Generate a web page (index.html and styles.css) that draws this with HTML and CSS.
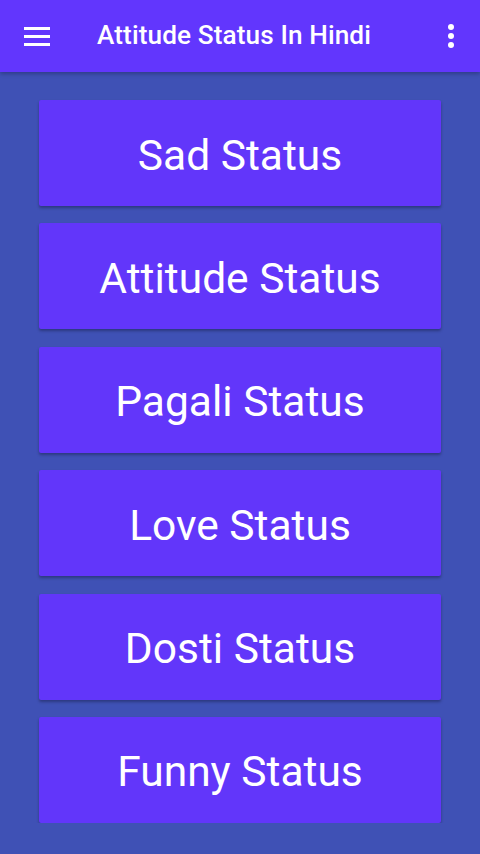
FILE: index.html
```html
<!DOCTYPE html>
<html lang="en">
<head>
  <meta charset="UTF-8">
  <title>Attitude Status In Hindi</title>
  <meta name="viewport" content="width=device-width, initial-scale=1">
  <link rel="stylesheet" href="styles.css">
</head>
<body>
  <header class="toolbar">
    <button class="icon-btn menu-btn" aria-label="Menu">
      <svg width="26" height="20" viewBox="0 0 26 20">
        <rect x="0" y="1" width="26" height="3" fill="#fff"/>
        <rect x="0" y="9" width="26" height="3" fill="#fff"/>
        <rect x="0" y="17" width="26" height="3" fill="#fff"/>
      </svg>
    </button>
    <h1 class="title">Attitude Status In Hindi</h1>
    <button class="icon-btn more-btn" aria-label="More">
      <svg width="8" height="24" viewBox="0 0 8 24">
        <circle cx="4" cy="3" r="3" fill="#fff"/>
        <circle cx="4" cy="12" r="3" fill="#fff"/>
        <circle cx="4" cy="21" r="3" fill="#fff"/>
      </svg>
    </button>
  </header>

  <main class="status-list">
    <button class="status-btn">Sad Status</button>
    <button class="status-btn">Attitude Status</button>
    <button class="status-btn">Pagali Status</button>
    <button class="status-btn">Love Status</button>
    <button class="status-btn">Dosti Status</button>
    <button class="status-btn">Funny Status</button>
  </main>
</body>
</html>
```

FILE: styles.css
```css
body {
  font-family: Roboto, "Liberation Sans", sans-serif;
  background-color: #3f51b5;
  margin: 0;
  padding: 0;
}
.toolbar {
  height: 72px;
  background-color: #6236fd;
  display: flex;
  align-items: center;
  box-shadow: 0 2px 4px rgba(0, 0, 0, 0.25);
  position: relative;
}
.icon-btn {
  background: none;
  border: none;
  padding: 0;
  display: flex;
  align-items: center;
  justify-content: center;
}
.menu-btn {
  width: 26px;
  margin-left: 24px;
  margin-top: -1px;
}
.title {
  flex: 1;
  margin: -2px 0 0 47px;
  color: #fff;
  font-size: 26.2px;
  font-weight: 500;
  letter-spacing: 0.1px;
}
.more-btn {
  width: 8px;
  margin-right: 25px;
  margin-top: -1px;
}
.status-list {
  display: flex;
  flex-direction: column;
  gap: 17.4px;
  padding: 28px 39px 0;
}
.status-btn {
  height: 106px;
  border: none;
  border-radius: 2px;
  background-color: #6236fa;
  color: #fff;
  font-family: Roboto, "Liberation Sans", sans-serif;
  font-size: 42.5px;
  box-shadow: 0 2px 3px rgba(0, 0, 0, 0.3);
  padding: 4px 0 0;
}
```
